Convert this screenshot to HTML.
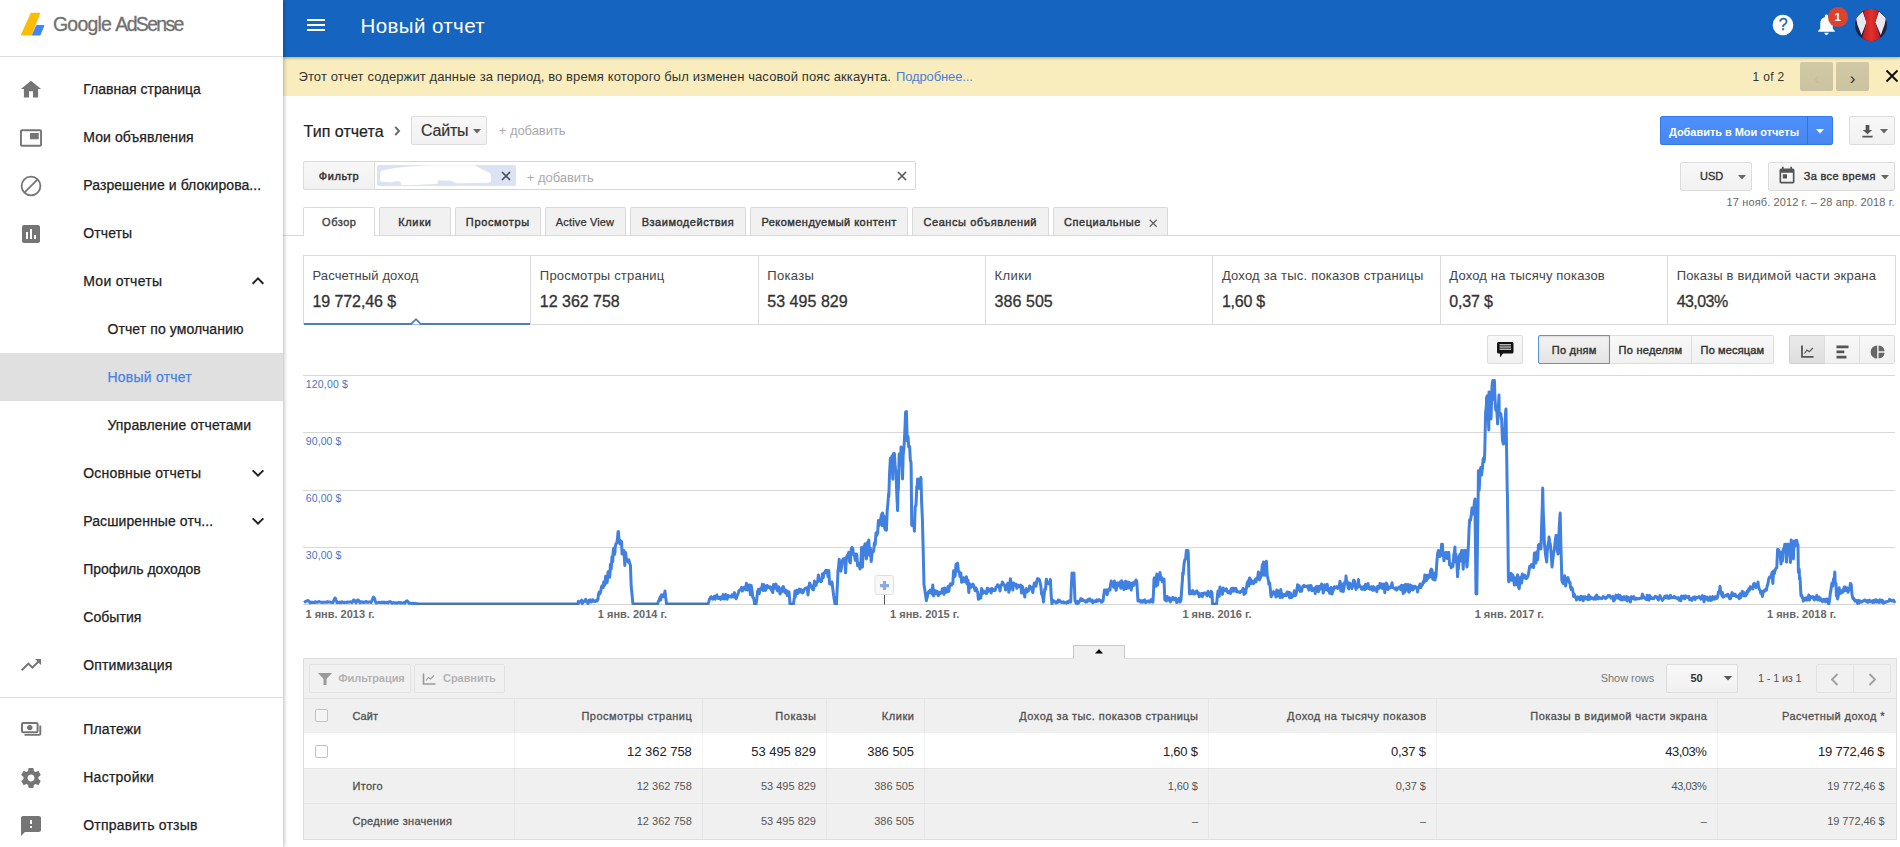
<!DOCTYPE html>
<html lang="ru"><head><meta charset="utf-8"><title>Новый отчет – Google AdSense</title>
<style>
html,body{margin:0;padding:0;}
body{width:1900px;height:847px;overflow:hidden;background:#fff;position:relative;font-family:"Liberation Sans",sans-serif;}
.t{position:absolute;white-space:nowrap;}
.b{position:absolute;box-sizing:border-box;}
svg{position:absolute;overflow:visible;}
</style></head><body>
<div class="b" style="left:0.00px;top:0.00px;width:283.00px;height:847.00px;background:#fff;box-shadow:1px 0 4px rgba(0,0,0,.28);z-index:5;"></div>
<div class="b" style="left:0;top:0;width:283px;height:847px;z-index:6;">
<svg style="left:0;top:0" width="60" height="56" viewBox="0 0 60 56"><path d="M30.9 12.8h8.6c.5 0 .8.4.6.9L31.6 35.4H21.6c-.5 0-.8-.4-.6-.9z" fill="#fbbc05"/><path d="M37.2 24.9h6.4c.6 0 .9.5.7 1l-3.6 8.6c-.2.5-.7.9-1.300.9H31.6l4.400-9.600c.2-.5.7-.9 1.200-.9z" fill="#4285f4"/></svg>
<div class="t" style="left:53.00px;top:14.79px;font-size:19.5px;line-height:19.5px;color:#707070;letter-spacing:-0.813px;-webkit-text-stroke:0.3px;">Google</div>
<div class="t" style="left:115.30px;top:14.79px;font-size:19.5px;line-height:19.5px;color:#707070;letter-spacing:-1.663px;-webkit-text-stroke:0.3px;">AdSense</div>
<div class="b" style="left:0.00px;top:56.00px;width:283.00px;height:1.00px;background:#e0e0e0;"></div>
<svg style="left:19px;top:77px" width="24" height="24" viewBox="0 0 24 24"><path d="M10 20.5v-6.300h4v6.300h5.100V12h3L12 3.800 1.900 12h3v8.500z" fill="#757575"/></svg>
<div class="t" style="left:83.25px;top:82.15px;font-size:14px;line-height:14px;color:#212121;letter-spacing:0.005px;-webkit-text-stroke:0.25px;">Главная страница</div>
<svg style="left:19px;top:126px" width="24" height="24" viewBox="0 0 24 24"><path d="M19.750 7h-8.750v6.250h8.750zM21 3.300H3c-1.100 0-2 .9-2 2v13.400c0 1.100.9 2 2 2h18c1.100 0 2-.9 2-2V5.300c0-1.100-.9-2-2-2zm.1 15.500H2.900V5.200h18.200z" fill="#757575"/></svg>
<div class="t" style="left:83.25px;top:130.15px;font-size:14px;line-height:14px;color:#212121;letter-spacing:0.094px;-webkit-text-stroke:0.25px;">Мои объявления</div>
<svg style="left:18.700px;top:173.700px" width="24" height="24" viewBox="0 0 24 24"><circle cx="12" cy="12" r="9.400" fill="none" stroke="#757575" stroke-width="1.800"/><path d="M18.600 5.400L5.400 18.600" stroke="#757575" stroke-width="1.800"/></svg>
<div class="t" style="left:83.25px;top:178.15px;font-size:14px;line-height:14px;color:#212121;letter-spacing:0.072px;-webkit-text-stroke:0.25px;">Разрешение и блокирова...</div>
<svg style="left:19px;top:221.700px" width="24" height="24" viewBox="0 0 24 24"><path d="M19 3H5c-1.100 0-2 .9-2 2v14c0 1.100.9 2 2 2h14c1.100 0 2-.9 2-2V5c0-1.100-.9-2-2-2zM9 17H7v-7h2zm4 0h-2V7h2zm4 0h-2v-4h2z" fill="#757575"/></svg>
<div class="t" style="left:83.25px;top:226.15px;font-size:14px;line-height:14px;color:#212121;letter-spacing:0.102px;-webkit-text-stroke:0.25px;">Отчеты</div>
<div class="t" style="left:83.25px;top:274.15px;font-size:14px;line-height:14px;color:#212121;letter-spacing:0.271px;-webkit-text-stroke:0.25px;">Мои отчеты</div>
<svg style="left:246px;top:269px" width="24" height="24" viewBox="0 0 24 24"><path d="M6.700 14.700L12 9.400l5.300 5.300" fill="none" stroke="#212121" stroke-width="2"/></svg>
<div class="t" style="left:107.50px;top:322.15px;font-size:14px;line-height:14px;color:#212121;letter-spacing:0.089px;-webkit-text-stroke:0.25px;">Отчет по умолчанию</div>
<div class="b" style="left:0.00px;top:353.00px;width:283.00px;height:48.00px;background:#e0e0e0;"></div>
<div class="t" style="left:107.50px;top:370.15px;font-size:14px;line-height:14px;color:#4a80e0;letter-spacing:0.225px;-webkit-text-stroke:0.25px;">Новый отчет</div>
<div class="t" style="left:107.50px;top:418.15px;font-size:14px;line-height:14px;color:#212121;letter-spacing:0.108px;-webkit-text-stroke:0.25px;">Управление отчетами</div>
<div class="t" style="left:83.25px;top:466.15px;font-size:14px;line-height:14px;color:#212121;letter-spacing:0.181px;-webkit-text-stroke:0.25px;">Основные отчеты</div>
<svg style="left:246px;top:461px" width="24" height="24" viewBox="0 0 24 24"><path d="M6.700 9.400L12 14.700l5.300-5.300" fill="none" stroke="#212121" stroke-width="2"/></svg>
<div class="t" style="left:83.25px;top:514.15px;font-size:14px;line-height:14px;color:#212121;letter-spacing:0.093px;-webkit-text-stroke:0.25px;">Расширенные отч...</div>
<svg style="left:246px;top:509px" width="24" height="24" viewBox="0 0 24 24"><path d="M6.700 9.400L12 14.700l5.300-5.300" fill="none" stroke="#212121" stroke-width="2"/></svg>
<div class="t" style="left:83.25px;top:562.15px;font-size:14px;line-height:14px;color:#212121;letter-spacing:-0.022px;-webkit-text-stroke:0.25px;">Профиль доходов</div>
<div class="t" style="left:83.25px;top:610.15px;font-size:14px;line-height:14px;color:#212121;letter-spacing:0.065px;-webkit-text-stroke:0.25px;">События</div>
<svg style="left:19px;top:653px" width="24" height="24" viewBox="0 0 24 24"><path d="M16 6l2.290 2.290-4.880 4.880-4-4L2 16.590 3.410 18l6-6 4 4 6.300-6.290L22 12V6z" fill="#757575"/></svg>
<div class="t" style="left:83.25px;top:658.15px;font-size:14px;line-height:14px;color:#212121;letter-spacing:0.134px;-webkit-text-stroke:0.25px;">Оптимизация</div>
<div class="b" style="left:0.00px;top:697.00px;width:283.00px;height:1.00px;background:#e0e0e0;"></div>
<svg style="left:19px;top:717px" width="24" height="24" viewBox="0 0 24 24"><rect x="3" y="5.900" width="15.600" height="9.400" rx="1.200" fill="none" stroke="#757575" stroke-width="2"/><circle cx="10.800" cy="10.600" r="2.700" fill="#757575"/><path d="M21.300 8.500v8.200c0 .7-.5 1.200-1.200 1.200H5.500" fill="none" stroke="#757575" stroke-width="1.900"/></svg>
<div class="t" style="left:83.25px;top:722.15px;font-size:14px;line-height:14px;color:#212121;letter-spacing:0.175px;-webkit-text-stroke:0.25px;">Платежи</div>
<svg style="left:19px;top:766px" width="24" height="24" viewBox="0 0 24 24"><path d="M19.430 12.980c.04-.32.070-.64.070-.98s-.030-.66-.07-.98l2.110-1.650c.19-.15.240-.42.120-.64l-2-3.460c-.12-.22-.39-.3-.61-.22l-2.490 1c-.52-.4-1.080-.73-1.690-.98l-.38-2.650C14.460 2.180 14.250 2 14 2h-4c-.25 0-.46.180-.49.420l-.38 2.650c-.61.250-1.170.59-1.690.98l-2.490-1c-.23-.09-.49 0-.61.220l-2 3.460c-.13.220-.07.490.12.640l2.110 1.650c-.04.320-.07.650-.07.980s.03.660.07.980l-2.110 1.650c-.19.150-.24.420-.12.640l2 3.460c.12.220.39.300.61.220l2.490-1c.52.400 1.080.73 1.690.98l.38 2.650c.03.240.24.420.49.420h4c.25 0 .46-.18.490-.42l.38-2.650c.61-.25 1.170-.59 1.690-.98l2.490 1c.23.090.49 0 .61-.22l2-3.460c.12-.22.070-.49-.12-.64l-2.110-1.650zM12 15.500c-1.930 0-3.500-1.570-3.500-3.500s1.570-3.500 3.500-3.500 3.500 1.570 3.500 3.500-1.570 3.500-3.500 3.500z" fill="#757575"/></svg>
<div class="t" style="left:83.25px;top:770.15px;font-size:14px;line-height:14px;color:#212121;letter-spacing:0.251px;-webkit-text-stroke:0.25px;">Настройки</div>
<svg style="left:19px;top:814px" width="24" height="24" viewBox="0 0 24 24"><path d="M20 2H4c-1.100 0-1.990.9-1.990 2L2 22l4-4h14c1.100 0 2-.9 2-2V4c0-1.100-.9-2-2-2zm-7 12h-2v-2h2v2zm0-4h-2V6h2v4z" fill="#757575"/></svg>
<div class="t" style="left:83.25px;top:818.15px;font-size:14px;line-height:14px;color:#212121;letter-spacing:0.219px;-webkit-text-stroke:0.25px;">Отправить отзыв</div>
</div>
<div class="b" style="left:283.00px;top:0.00px;width:1617.00px;height:57.00px;background:#1565c0;box-shadow:0 1px 3px rgba(0,0,0,.32);z-index:4;"></div>
<div class="b" style="left:0;top:0;width:1900px;height:56px;z-index:7;">
<svg style="left:304px;top:13px" width="24" height="24" viewBox="0 0 24 24"><path d="M3 18h18v-2H3zm0-5h18v-2H3zm0-7v2h18V6z" fill="#fff"/></svg>
<div class="t" style="left:360.50px;top:15.65px;font-size:20.5px;line-height:20.5px;color:#fff;letter-spacing:0.409px;">Новый отчет</div>
<svg style="left:1771.200px;top:13px" width="24" height="24" viewBox="0 0 24 24"><circle cx="12" cy="12" r="10.300" fill="#fff"/></svg>
<div class="t" style="left:1783.20px;transform:translateX(-50%);top:17.26px;font-size:16px;line-height:16px;color:#1d5fae;-webkit-text-stroke:0.3px;">?</div>
<svg style="left:1814px;top:12.100px" width="25" height="25" viewBox="0 0 24 24"><path d="M12 22c1.100 0 2-.9 2-2h-4c0 1.100.89 2 2 2zm6-6v-5c0-3.070-1.640-5.640-4.500-6.320V4c0-.83-.67-1.500-1.500-1.500s-1.500.67-1.500 1.500v.68C7.630 5.360 6 7.920 6 11v5l-2 2v1h16v-1l-2-2z" fill="#fff"/></svg>
<div class="b" style="left:1828.20px;top:7.10px;width:19.60px;height:19.60px;background:#d9432f;border-radius:50%;"></div>
<div class="t" style="left:1837.60px;transform:translateX(-50%);top:11.97px;font-size:11.5px;line-height:11.5px;color:#fff;font-weight:bold;">1</div>
<svg style="left:1855px;top:8.900px" width="32" height="32" viewBox="0 0 32 32"><defs><clipPath id="av"><circle cx="16" cy="16" r="16"/></clipPath><linearGradient id="tie" x1="0" x2="1"><stop offset="0" stop-color="#c4161c"/><stop offset=".5" stop-color="#e0322d"/><stop offset="1" stop-color="#b81419"/></linearGradient></defs><g clip-path="url(#av)"><rect width="32" height="32" fill="#1d2444"/><path d="M1 9L7.700 2.500 11.400 13.300 6.500 26 2.500 16z" fill="#ebe6ee"/><path d="M31 9L23.900 2.500 20.300 13.300 25.800 26 29.500 16z" fill="#ebe6ee"/><path d="M7.700 0H23.900L20.300 13.300 26.500 32H6.500L11.400 13.300z" fill="url(#tie)"/></g></svg>
</div>
<div class="b" style="left:283.00px;top:56.00px;width:1617.00px;height:40.00px;background:#f9edbe;"></div>
<div class="t" style="left:298.50px;top:70.00px;font-size:13px;line-height:13px;color:#333;letter-spacing:0.109px;">Этот отчет содержит данные за период, во время которого был изменен часовой пояс аккаунта.</div>
<div class="t" style="left:896.00px;top:70.00px;font-size:13px;line-height:13px;color:#4b7fd6;letter-spacing:-0.129px;">Подробнее...</div>
<div class="t" style="left:1752.50px;top:71.34px;font-size:12px;line-height:12px;color:#333;letter-spacing:0.330px;">1 of 2</div>
<div class="b" style="left:1800.00px;top:62.00px;width:33.00px;height:29.00px;background:linear-gradient(#d1c8a5,#cbc29f);border-radius:2px;"></div>
<div class="b" style="left:1836.00px;top:62.00px;width:33.00px;height:29.00px;background:linear-gradient(#d1c8a5,#cbc29f);border-radius:2px;"></div>
<div class="t" style="left:1816.50px;transform:translateX(-50%);top:69.61px;font-size:17px;line-height:17px;color:#c5bc9c;">‹</div>
<div class="t" style="left:1852.50px;transform:translateX(-50%);top:69.61px;font-size:17px;line-height:17px;color:#333;">›</div>
<svg style="left:1885.200px;top:69px" width="14" height="14" viewBox="0 0 14 14"><path d="M1.500 1.500l11 11M12.500 1.500l-11 11" stroke="#111" stroke-width="2" fill="none"/></svg>
<div class="t" style="left:303.60px;top:123.86px;font-size:16px;line-height:16px;color:#222;letter-spacing:0.026px;-webkit-text-stroke:0.2px;">Тип отчета</div>
<svg style="left:393.500px;top:126px" width="7" height="10" viewBox="0 0 7 10"><path d="M1.200 .800L5 5 1.200 9.200" stroke="#6a6a6a" stroke-width="2" fill="none"/></svg>
<div class="b" style="left:411.00px;top:116.00px;width:76.00px;height:29.00px;background:linear-gradient(#f8f8f8,#f1f1f1);border:1px solid #dcdcdc;border-radius:2px;"></div>
<div class="t" style="left:421.00px;top:123.06px;font-size:16px;line-height:16px;color:#333;letter-spacing:-0.200px;-webkit-text-stroke:0.2px;">Сайты</div>
<svg style="left:473px;top:129px" width="8" height="5" viewBox="0 0 8 5"><path d="M0 0h8L4 4.500z" fill="#666"/></svg>
<div class="t" style="left:498.80px;top:123.70px;font-size:13px;line-height:13px;color:#aaa;letter-spacing:-0.059px;">+ добавить</div>
<div class="b" style="left:1660.00px;top:116.00px;width:173.00px;height:29.00px;background:linear-gradient(#4d90fe,#4787ed);border:1px solid #3079ed;border-radius:2px;"></div>
<div class="b" style="left:1806.50px;top:117.00px;width:1.00px;height:26.50px;background:#3571d6;"></div>
<div class="t" style="left:1669.00px;top:126.69px;font-size:11px;line-height:11px;color:#fff;font-weight:bold;letter-spacing:-0.039px;">Добавить в Мои отчеты</div>
<svg style="left:1816px;top:128.500px" width="8" height="5" viewBox="0 0 8 5"><path d="M0 0h8L4 4.500z" fill="#fff"/></svg>
<div class="b" style="left:1849.00px;top:116.00px;width:46.00px;height:29.00px;background:linear-gradient(#f8f8f8,#f1f1f1);border:1px solid #dcdcdc;border-radius:2px;"></div>
<svg style="left:1860.500px;top:123.500px" width="13" height="14" viewBox="0 0 14 15"><path d="M5 1h4v5.500h3L7 11 2 6.500h3zM1.500 12.500h11v2h-11z" fill="#555"/></svg>
<svg style="left:1880px;top:129px" width="8" height="5" viewBox="0 0 8 5"><path d="M0 0h8L4 4.500z" fill="#666"/></svg>
<div class="b" style="left:303.00px;top:161.00px;width:613.00px;height:29.00px;background:#fff;border:1px solid #d6d6d6;border-radius:2px;"></div>
<div class="b" style="left:303.00px;top:161.00px;width:72.00px;height:29.00px;background:linear-gradient(#f8f8f8,#f1f1f1);border:1px solid #dcdcdc;border-radius:2px;border-radius:2px 0 0 2px;"></div>
<div class="t" style="left:318.80px;top:170.69px;font-size:11px;line-height:11px;color:#333;letter-spacing:0.575px;-webkit-text-stroke:0.45px;">Фильтр</div>
<div class="b" style="left:377.00px;top:165.00px;width:139.00px;height:21.00px;background:#dbe2f3;border-radius:2px;"></div>
<svg style="left:377px;top:165px" width="139" height="21" viewBox="0 0 139 21"><path d="M3.1 8.2 L4.8 5.6 L17.4 3.1 L32.6 1.4 L55.3 0.2 L97.4 0.2 L102.5 3.1 L113.4 8.2 L114.3 16.6 L110.9 17.8 L79.7 18.3 L73.8 15.7 L61.2 15.3 L60.4 19.1 L34.3 19.9 L24.2 19.9 L23.3 16.2 L18.3 16.2 L14.1 17.4 L3.1 16.6z" fill="#fff"/></svg>
<svg style="left:500.700px;top:170.700px" width="10" height="10" viewBox="0 0 10 10"><path d="M1 1l8 8M9 1l-8 8" stroke="#474d5c" stroke-width="1.700" fill="none"/></svg>
<div class="t" style="left:526.80px;top:170.70px;font-size:13px;line-height:13px;color:#aaa;letter-spacing:-0.039px;">+ добавить</div>
<svg style="left:896.500px;top:171px" width="10" height="10" viewBox="0 0 10 10"><path d="M1 1l8 8M9 1l-8 8" stroke="#555" stroke-width="1.600" fill="none"/></svg>
<div class="b" style="left:1680.00px;top:162.00px;width:72.00px;height:29.00px;background:linear-gradient(#f8f8f8,#f1f1f1);border:1px solid #dcdcdc;border-radius:2px;"></div>
<div class="t" style="left:1700.00px;top:170.99px;font-size:11px;line-height:11px;color:#333;letter-spacing:0.025px;-webkit-text-stroke:0.35px;">USD</div>
<svg style="left:1738px;top:174.500px" width="8" height="5" viewBox="0 0 8 5"><path d="M0 0h8L4 4.500z" fill="#666"/></svg>
<div class="b" style="left:1768.00px;top:162.00px;width:127.00px;height:29.00px;background:linear-gradient(#f8f8f8,#f1f1f1);border:1px solid #dcdcdc;border-radius:2px;"></div>
<svg style="left:1777px;top:166px" width="20" height="20" viewBox="0 0 24 24"><path d="M19 3h-1V1h-2v2H8V1H6v2H5c-1.110 0-1.990.9-1.990 2L3 19c0 1.100.89 2 2 2h14c1.100 0 2-.9 2-2V5c0-1.100-.9-2-2-2zm0 16H5V8h14v11zM7 10h5v5H7z" fill="#555"/></svg>
<div class="t" style="left:1803.70px;top:170.99px;font-size:11px;line-height:11px;color:#333;letter-spacing:0.349px;-webkit-text-stroke:0.35px;">За все время</div>
<svg style="left:1881px;top:174.500px" width="8" height="5" viewBox="0 0 8 5"><path d="M0 0h8L4 4.500z" fill="#666"/></svg>
<div class="t" style="right:5.39px;top:197.49px;font-size:11px;line-height:11px;color:#666;letter-spacing:0.113px;">17 нояб. 2012 г. – 28 апр. 2018 г.</div>
<div class="b" style="left:283.00px;top:235.00px;width:1617.00px;height:1.00px;background:#d9d9d9;"></div>
<div class="b" style="left:303.00px;top:207.00px;width:72.00px;height:29.00px;background:#fff;border:1px solid #d9d9d9;border-bottom:none;border-radius:2px 2px 0 0;"></div>
<div class="t" style="left:339.30px;transform:translateX(-50%);top:216.59px;font-size:11px;line-height:11px;color:#444;letter-spacing:0.534px;-webkit-text-stroke:0.4px;">Обзор</div>
<div class="b" style="left:379.00px;top:207.00px;width:72.00px;height:28.00px;background:#f1f1f1;border:1px solid #d9d9d9;border-bottom:none;border-radius:2px 2px 0 0;"></div>
<div class="t" style="left:414.80px;transform:translateX(-50%);top:216.59px;font-size:11px;line-height:11px;color:#333;letter-spacing:0.681px;-webkit-text-stroke:0.4px;">Клики</div>
<div class="b" style="left:455.00px;top:207.00px;width:86.00px;height:28.00px;background:#f1f1f1;border:1px solid #d9d9d9;border-bottom:none;border-radius:2px 2px 0 0;"></div>
<div class="t" style="left:497.80px;transform:translateX(-50%);top:216.59px;font-size:11px;line-height:11px;color:#333;letter-spacing:0.635px;-webkit-text-stroke:0.4px;">Просмотры</div>
<div class="b" style="left:545.00px;top:207.00px;width:81.00px;height:28.00px;background:#f1f1f1;border:1px solid #d9d9d9;border-bottom:none;border-radius:2px 2px 0 0;"></div>
<div class="t" style="left:585.00px;transform:translateX(-50%);top:216.59px;font-size:11px;line-height:11px;color:#333;letter-spacing:0.150px;-webkit-text-stroke:0.25px;">Active View</div>
<div class="b" style="left:630.00px;top:207.00px;width:116.00px;height:28.00px;background:#f1f1f1;border:1px solid #d9d9d9;border-bottom:none;border-radius:2px 2px 0 0;"></div>
<div class="t" style="left:687.95px;transform:translateX(-50%);top:216.59px;font-size:11px;line-height:11px;color:#333;letter-spacing:0.527px;-webkit-text-stroke:0.4px;">Взаимодействия</div>
<div class="b" style="left:750.00px;top:207.00px;width:158.00px;height:28.00px;background:#f1f1f1;border:1px solid #d9d9d9;border-bottom:none;border-radius:2px 2px 0 0;"></div>
<div class="t" style="left:829.05px;transform:translateX(-50%);top:216.59px;font-size:11px;line-height:11px;color:#333;letter-spacing:0.460px;-webkit-text-stroke:0.4px;">Рекомендуемый контент</div>
<div class="b" style="left:912.00px;top:207.00px;width:137.00px;height:28.00px;background:#f1f1f1;border:1px solid #d9d9d9;border-bottom:none;border-radius:2px 2px 0 0;"></div>
<div class="t" style="left:980.30px;transform:translateX(-50%);top:216.59px;font-size:11px;line-height:11px;color:#333;letter-spacing:0.556px;-webkit-text-stroke:0.4px;">Сеансы объявлений</div>
<div class="b" style="left:1053.00px;top:207.00px;width:115.00px;height:28.00px;background:#f1f1f1;border:1px solid #d9d9d9;border-bottom:none;border-radius:2px 2px 0 0;"></div>
<div class="t" style="left:1064.00px;top:216.59px;font-size:11px;line-height:11px;color:#333;letter-spacing:0.552px;-webkit-text-stroke:0.4px;">Специальные</div>
<svg style="left:1149.300px;top:218.500px" width="8.400" height="8.400" viewBox="0 0 8.400 8.400"><path d="M.7.700l7 7M7.700.700l-7 7" stroke="#666" stroke-width="1.300" fill="none"/></svg>
<div class="b" style="left:303.00px;top:255.00px;width:1593.00px;height:70.00px;background:#fff;border:1px solid #dadada;"></div>
<div class="t" style="left:312.50px;top:269.00px;font-size:13px;line-height:13px;color:#444;letter-spacing:0.114px;">Расчетный доход</div>
<div class="t" style="left:312.50px;top:294.06px;font-size:16px;line-height:16px;color:#333;letter-spacing:-0.083px;-webkit-text-stroke:0.3px;">19 772,46 $</div>
<div class="b" style="left:530.36px;top:255.30px;width:1.00px;height:69.00px;background:#dadada;"></div>
<div class="t" style="left:539.86px;top:269.00px;font-size:13px;line-height:13px;color:#444;letter-spacing:0.199px;">Просмотры страниц</div>
<div class="t" style="left:539.86px;top:294.06px;font-size:16px;line-height:16px;color:#333;letter-spacing:-0.027px;-webkit-text-stroke:0.3px;">12 362 758</div>
<div class="b" style="left:757.71px;top:255.30px;width:1.00px;height:69.00px;background:#dadada;"></div>
<div class="t" style="left:767.21px;top:269.00px;font-size:13px;line-height:13px;color:#444;letter-spacing:0.344px;">Показы</div>
<div class="t" style="left:767.21px;top:294.06px;font-size:16px;line-height:16px;color:#333;letter-spacing:0.043px;-webkit-text-stroke:0.3px;">53 495 829</div>
<div class="b" style="left:985.07px;top:255.30px;width:1.00px;height:69.00px;background:#dadada;"></div>
<div class="t" style="left:994.57px;top:269.00px;font-size:13px;line-height:13px;color:#444;letter-spacing:0.426px;">Клики</div>
<div class="t" style="left:994.57px;top:294.06px;font-size:16px;line-height:16px;color:#333;letter-spacing:0.060px;-webkit-text-stroke:0.3px;">386 505</div>
<div class="b" style="left:1212.43px;top:255.30px;width:1.00px;height:69.00px;background:#dadada;"></div>
<div class="t" style="left:1221.93px;top:269.00px;font-size:13px;line-height:13px;color:#444;letter-spacing:0.207px;">Доход за тыс. показов страницы</div>
<div class="t" style="left:1221.93px;top:294.06px;font-size:16px;line-height:16px;color:#333;letter-spacing:-0.247px;-webkit-text-stroke:0.3px;">1,60 $</div>
<div class="b" style="left:1439.79px;top:255.30px;width:1.00px;height:69.00px;background:#dadada;"></div>
<div class="t" style="left:1449.29px;top:269.00px;font-size:13px;line-height:13px;color:#444;letter-spacing:0.176px;">Доход на тысячу показов</div>
<div class="t" style="left:1449.29px;top:294.06px;font-size:16px;line-height:16px;color:#333;letter-spacing:-0.163px;-webkit-text-stroke:0.3px;">0,37 $</div>
<div class="b" style="left:1667.14px;top:255.30px;width:1.00px;height:69.00px;background:#dadada;"></div>
<div class="t" style="left:1676.64px;top:269.00px;font-size:13px;line-height:13px;color:#444;letter-spacing:0.202px;">Показы в видимой части экрана</div>
<div class="t" style="left:1676.64px;top:294.06px;font-size:16px;line-height:16px;color:#333;letter-spacing:-0.544px;-webkit-text-stroke:0.3px;">43,03%</div>
<div class="b" style="left:304.00px;top:323.00px;width:226.00px;height:2.00px;background:#4b7db6;"></div>
<svg style="left:409.700px;top:318px" width="12" height="7" viewBox="0 0 12 7"><path d="M.6 6.600L6 1.200l5.400 5.400" fill="#fff" stroke="#4b7db6" stroke-width="1.700"/></svg>
<div class="b" style="left:1487.00px;top:335.00px;width:36.00px;height:29.00px;background:linear-gradient(#f8f8f8,#f1f1f1);border:1px solid #dcdcdc;border-radius:2px;"></div>
<svg style="left:1497px;top:342px" width="16.500" height="16" viewBox="0 0 16.500 16"><path d="M1.500 0h13.500c.8 0 1.500.7 1.500 1.500v8.500c0 .8-.7 1.500-1.500 1.500H6l-3 4v-4H1.500C.7 11.500 0 10.800 0 10V1.500C0 .7.7 0 1.500 0z" fill="#111"/><path d="M2.500 2.800h11.500M2.500 5h11.500M2.500 7.200h11.500" stroke="#fff" stroke-width="1"/></svg>
<div class="b" style="left:1538.00px;top:335.00px;width:236.00px;height:29.00px;background:linear-gradient(#f8f8f8,#f1f1f1);border:1px solid #dcdcdc;border-radius:2px;"></div>
<div class="b" style="left:1538.00px;top:335.00px;width:72.00px;height:29.00px;background:linear-gradient(#f3f3f3,#e4e4e4);border:1px solid #5b93d6;border-radius:2px 0 0 2px;box-shadow:inset 0 1px 2px rgba(0,0,0,.1);"></div>
<div class="b" style="left:1691.00px;top:336.00px;width:1.00px;height:27.00px;background:#dcdcdc;"></div>
<div class="t" style="left:1551.80px;top:344.99px;font-size:11px;line-height:11px;color:#333;letter-spacing:0.230px;-webkit-text-stroke:0.4px;">По дням</div>
<div class="t" style="left:1618.60px;top:344.99px;font-size:11px;line-height:11px;color:#333;letter-spacing:0.256px;-webkit-text-stroke:0.4px;">По неделям</div>
<div class="t" style="left:1700.60px;top:344.99px;font-size:11px;line-height:11px;color:#333;letter-spacing:0.150px;-webkit-text-stroke:0.4px;">По месяцам</div>
<div class="b" style="left:1789.00px;top:335.00px;width:106.00px;height:29.00px;background:linear-gradient(#f8f8f8,#f1f1f1);border:1px solid #dcdcdc;border-radius:2px;"></div>
<div class="b" style="left:1789.00px;top:335.00px;width:36.00px;height:29.00px;background:linear-gradient(#eaeaea,#dedede);border:1px solid #d0d0d0;border-radius:2px 0 0 2px;"></div>
<div class="b" style="left:1824.30px;top:336.00px;width:1.00px;height:27.00px;background:#dcdcdc;"></div>
<div class="b" style="left:1858.80px;top:336.00px;width:1.00px;height:27.00px;background:#dcdcdc;"></div>
<svg style="left:1800px;top:344px" width="15" height="15" viewBox="0 0 15 15"><path d="M2 1.500v11.300h11.500" stroke="#555" stroke-width="1.800" fill="none"/><path d="M4.500 9.500l2.500-3.500 2.300 1.800 3.500-3.800" stroke="#555" stroke-width="1.200" fill="none"/></svg>
<svg style="left:1835.500px;top:344.500px" width="14" height="14" viewBox="0 0 14 14"><path d="M.5.500h12v2.700H.5zM.5 5.600h7.800v2.700H.5zM.5 10.700h10v2.700H.5z" fill="#555"/></svg>
<svg style="left:1870.500px;top:344.500px" width="14" height="14" viewBox="0 0 14 14"><path d="M6.200.4v13.200A6.600 6.600 0 0 1 6.200.4zM7.600.4A6.600 6.600 0 0 1 13.600 6.300H7.600zM7.600 7.700h6A6.600 6.600 0 0 1 7.600 13.600z" fill="#666"/></svg>
<svg style="left:303px;top:370px" width="1597" height="260" viewBox="0 0 1597 260"><defs><clipPath id="cc"><rect x="0" y="0" width="1597" height="235"/></clipPath></defs>
<path d="M0 5.5H1592" stroke="#d9d9d9" stroke-width="1"/>
<path d="M0 62.5H1592" stroke="#d9d9d9" stroke-width="1"/>
<path d="M0 120.5H1592" stroke="#d9d9d9" stroke-width="1"/>
<path d="M0 177.5H1592" stroke="#d9d9d9" stroke-width="1"/>
<path d="M0 234.500H1592" stroke="#d4d4d4" stroke-width="1"/>
<text x="2.800" y="17.8" font-size="10.500" letter-spacing="0.179" fill="#4a74c4" font-family="Liberation Sans, sans-serif">120,00 $</text>
<text x="2.800" y="74.5" font-size="10.500" letter-spacing="0.096" fill="#4a74c4" font-family="Liberation Sans, sans-serif">90,00 $</text>
<text x="2.800" y="131.7" font-size="10.500" letter-spacing="0.096" fill="#4a74c4" font-family="Liberation Sans, sans-serif">60,00 $</text>
<text x="2.800" y="189.2" font-size="10.500" letter-spacing="0.096" fill="#4a74c4" font-family="Liberation Sans, sans-serif">30,00 $</text>
<text x="2.5" y="247.600" font-size="11" font-weight="bold" fill="#686868" font-family="Liberation Sans, sans-serif">1 янв. 2013 г.</text>
<text x="294.8" y="247.600" font-size="11" font-weight="bold" fill="#686868" font-family="Liberation Sans, sans-serif">1 янв. 2014 г.</text>
<text x="587.1" y="247.600" font-size="11" font-weight="bold" fill="#686868" font-family="Liberation Sans, sans-serif">1 янв. 2015 г.</text>
<text x="879.4" y="247.600" font-size="11" font-weight="bold" fill="#686868" font-family="Liberation Sans, sans-serif">1 янв. 2016 г.</text>
<text x="1171.7" y="247.600" font-size="11" font-weight="bold" fill="#686868" font-family="Liberation Sans, sans-serif">1 янв. 2017 г.</text>
<text x="1464.0" y="247.600" font-size="11" font-weight="bold" fill="#686868" font-family="Liberation Sans, sans-serif">1 янв. 2018 г.</text>
<path d="M581.500 224.500V234.500" stroke="#555" stroke-width="1"/><rect x="572" y="205.500" width="18.500" height="19" rx="2" fill="#f8f8f8" stroke="#e0e0e0"/><path d="M577 215.600h9M581.500 211.100v9" stroke="#8dabd9" stroke-width="3.200"/>
<polyline fill="none" stroke="#4080e0" stroke-width="3" clip-path="url(#cc)" stroke-linejoin="round" points="1.0,232.5 1.8,232.0 2.6,231.4 3.4,231.2 4.2,230.7 5.0,230.5 5.8,231.0 6.6,232.2 7.0,232.8 7.4,232.2 8.2,232.5 9.0,232.2 9.8,232.5 10.6,232.4 11.4,232.4 12.0,232.5 12.2,231.7 13.0,232.1 13.8,232.2 14.6,232.3 15.4,231.7 16.2,231.6 17.0,232.1 17.8,232.3 18.6,232.3 19.4,232.5 20.2,232.2 21.0,232.2 21.8,232.3 22.6,232.3 23.4,232.2 24.2,231.6 25.0,232.2 25.8,231.9 26.6,232.2 27.4,232.1 28.2,232.3 29.0,232.4 29.8,232.2 30.0,232.5 30.6,231.0 31.4,229.1 32.0,228.0 32.2,228.0 33.0,230.1 33.8,231.7 34.0,232.8 34.6,232.4 35.4,232.6 36.2,232.5 37.0,232.0 37.8,232.7 38.6,232.1 39.4,231.7 40.2,232.5 41.0,232.6 41.8,232.2 42.6,232.4 43.4,232.6 44.2,231.9 45.0,232.2 45.8,232.2 46.6,232.1 47.4,231.8 48.2,232.3 49.0,232.5 49.8,231.4 50.6,229.9 51.0,230.0 51.4,230.3 52.2,231.4 53.0,232.8 53.8,231.5 54.6,229.9 55.0,230.0 55.4,230.1 56.2,231.4 57.0,232.8 57.8,232.1 58.6,231.7 59.4,232.0 60.2,232.6 61.0,232.0 61.8,232.4 62.6,231.7 63.4,231.4 64.2,232.4 65.0,232.2 65.8,232.0 66.6,232.0 67.4,232.0 68.0,232.5 68.2,232.0 69.0,230.3 69.8,228.5 70.6,227.0 71.4,228.2 72.2,230.7 73.0,233.0 73.8,232.7 74.6,232.7 75.4,232.2 76.2,232.4 77.0,232.5 77.8,232.7 78.6,232.0 79.4,232.7 80.2,232.6 81.0,232.1 81.8,232.9 82.6,232.5 83.4,232.3 84.2,232.2 85.0,233.0 85.8,232.1 86.6,231.7 87.0,231.5 87.4,231.7 88.2,232.2 89.0,233.2 89.8,233.1 90.6,232.6 91.4,232.9 92.2,233.0 93.0,232.7 93.8,233.2 94.6,232.8 95.4,232.7 96.2,232.5 97.0,233.0 97.8,232.5 98.6,233.1 99.4,233.1 100.2,233.1 101.0,232.5 101.8,232.7 102.0,233.2 102.6,231.9 103.4,231.0 104.0,231.0 104.2,230.8 105.0,231.9 105.8,232.6 106.0,233.4 106.6,233.0 107.4,233.3 108.2,233.4 109.0,233.4 109.8,233.2 110.6,233.5 111.4,233.4 112.0,233.6 112.2,233.4 113.0,233.8 113.8,233.6 114.0,234.0 114.6,234.0 115.4,234.0 116.2,234.0 117.0,234.0 117.8,234.0 118.6,234.0 119.4,234.0 120.2,234.0 121.0,234.0 121.8,234.0 122.6,234.0 123.4,234.0 124.2,234.0 125.0,234.0 125.8,234.0 126.6,234.0 127.4,234.0 128.2,234.0 129.0,234.0 129.8,234.0 130.6,234.0 131.4,234.0 132.2,234.0 133.0,234.0 133.8,234.0 134.6,234.0 135.4,234.0 136.2,234.0 137.0,234.0 137.8,234.0 138.6,234.0 139.4,234.0 140.2,234.0 141.0,234.0 141.8,234.0 142.6,234.0 143.4,234.0 144.2,234.0 145.0,234.0 145.8,234.0 146.6,234.0 147.4,234.0 148.2,234.0 149.0,234.0 149.8,234.0 150.6,234.0 151.4,234.0 152.2,234.0 153.0,234.0 153.8,234.0 154.6,234.0 155.4,234.0 156.2,234.0 157.0,234.0 157.8,234.0 158.6,234.0 159.4,234.0 160.2,234.0 161.0,234.0 161.8,234.0 162.6,234.0 163.4,234.0 164.2,234.0 165.0,234.0 165.8,234.0 166.6,234.0 167.4,234.0 168.2,234.0 169.0,234.0 169.8,234.0 170.6,234.0 171.4,234.0 172.2,234.0 173.0,234.0 173.8,234.0 174.6,234.0 175.4,234.0 176.2,234.0 177.0,234.0 177.8,234.0 178.6,234.0 179.4,234.0 180.2,234.0 181.0,234.0 181.8,234.0 182.6,234.0 183.4,234.0 184.2,234.0 185.0,234.0 185.8,234.0 186.6,234.0 187.4,234.0 188.2,234.0 189.0,234.0 189.8,234.0 190.6,234.0 191.4,234.0 192.2,234.0 193.0,234.0 193.8,234.0 194.6,234.0 195.4,234.0 196.2,234.0 197.0,234.0 197.8,234.0 198.6,234.0 199.4,234.0 200.2,234.0 201.0,234.0 201.8,234.0 202.6,234.0 203.4,234.0 204.2,234.0 205.0,234.0 205.8,234.0 206.6,234.0 207.4,234.0 208.2,234.0 209.0,234.0 209.8,234.0 210.6,234.0 211.4,234.0 212.2,234.0 213.0,234.0 213.8,234.0 214.6,234.0 215.4,234.0 216.2,234.0 217.0,234.0 217.8,234.0 218.6,234.0 219.4,234.0 220.2,234.0 221.0,234.0 221.8,234.0 222.6,234.0 223.4,234.0 224.2,234.0 225.0,234.0 225.8,234.0 226.6,234.0 227.4,234.0 228.2,234.0 229.0,234.0 229.8,234.0 230.6,234.0 231.4,234.0 232.2,234.0 233.0,234.0 233.8,234.0 234.6,234.0 235.4,234.0 236.2,234.0 237.0,234.0 237.8,234.0 238.6,234.0 239.4,234.0 240.2,234.0 241.0,234.0 241.8,234.0 242.6,234.0 243.4,234.0 244.2,234.0 245.0,234.0 245.8,234.0 246.6,234.0 247.4,234.0 248.2,234.0 249.0,234.0 249.8,234.0 250.6,234.0 251.4,234.0 252.2,234.0 253.0,234.0 253.8,234.0 254.6,234.0 255.4,234.0 256.2,234.0 257.0,234.0 257.8,234.0 258.6,234.0 259.4,234.0 260.2,234.0 261.0,234.0 261.8,234.0 262.6,234.0 263.4,234.0 264.2,234.0 265.0,234.0 265.8,234.0 266.6,234.0 267.4,234.0 268.2,234.0 269.0,234.0 269.8,234.0 270.6,234.0 271.4,234.0 272.2,234.0 273.0,234.0 273.8,234.0 274.6,234.0 275.0,234.0 275.4,231.3 276.0,232.0 276.2,232.3 277.0,232.0 277.8,231.8 278.6,230.0 279.4,233.6 280.2,231.2 281.0,231.8 281.8,231.0 282.6,229.4 283.4,231.7 284.2,231.5 285.0,233.7 285.8,230.4 286.6,231.6 287.0,231.0 287.4,229.8 288.2,231.9 289.0,231.5 289.8,229.7 290.6,231.2 291.4,231.0 292.2,231.5 293.0,230.6 293.8,230.2 294.0,231.0 294.6,229.8 295.0,229.0 295.4,224.9 296.2,222.0 297.0,223.6 297.8,221.1 298.6,216.4 299.4,215.5 300.2,217.6 300.7,212.0 301.0,215.9 301.8,214.9 302.6,206.3 303.4,213.0 304.0,209.0 304.2,212.3 305.0,201.8 305.8,201.5 306.6,207.2 307.0,204.0 307.4,194.5 308.2,199.1 309.0,186.7 309.8,191.8 310.0,184.0 310.6,178.4 311.4,184.7 312.0,182.0 312.2,176.8 313.0,173.7 313.8,173.0 314.6,168.0 315.0,162.0 315.4,161.5 316.2,172.0 317.0,174.0 317.8,170.9 318.6,171.7 319.0,184.0 319.4,180.5 320.2,180.5 321.0,180.6 321.8,195.5 322.0,186.0 322.6,182.6 323.4,189.1 324.2,191.1 325.0,192.0 325.8,189.7 326.6,192.9 327.0,194.0 327.4,195.1 328.2,216.7 329.0,224.0 329.8,233.2 330.0,234.0 330.6,234.0 331.4,234.0 332.2,234.0 333.0,234.0 333.8,234.0 334.6,234.0 335.4,234.0 336.2,234.0 337.0,234.0 337.8,234.0 338.6,234.0 339.4,234.0 340.2,234.0 341.0,234.0 341.8,234.0 342.6,234.0 343.4,234.0 344.2,234.0 345.0,234.0 345.8,234.0 346.6,234.0 347.4,234.0 348.2,234.0 349.0,234.0 349.8,234.0 350.6,234.0 351.4,234.0 352.2,234.0 353.0,234.0 353.8,234.0 354.6,234.0 355.4,231.4 356.2,229.8 357.0,227.4 357.8,230.0 358.0,226.0 358.6,224.8 359.4,226.3 360.2,226.6 361.0,224.1 361.8,222.7 362.0,221.0 362.6,226.7 363.4,232.7 363.5,234.0 364.2,234.0 365.0,234.0 365.8,234.0 366.6,234.0 367.4,234.0 368.2,234.0 369.0,234.0 369.8,234.0 370.6,234.0 371.4,234.0 372.2,234.0 373.0,234.0 373.8,234.0 374.6,234.0 375.4,234.0 376.2,234.0 377.0,234.0 377.8,234.0 378.6,234.0 379.4,234.0 380.2,234.0 381.0,234.0 381.8,234.0 382.6,234.0 383.4,234.0 384.2,234.0 385.0,234.0 385.8,234.0 386.6,234.0 387.4,234.0 388.2,234.0 389.0,234.0 389.8,234.0 390.6,234.0 391.4,234.0 392.2,234.0 393.0,234.0 393.8,234.0 394.6,234.0 395.4,234.0 396.2,234.0 397.0,234.0 397.8,234.0 398.6,234.0 399.4,234.0 400.2,234.0 401.0,234.0 401.8,234.0 402.6,234.0 403.4,234.0 404.2,234.0 404.6,234.0 405.0,234.0 405.8,231.6 406.6,229.0 407.0,229.0 407.4,227.5 408.2,226.7 409.0,227.6 409.8,229.1 410.6,228.0 411.4,226.2 412.2,229.2 413.0,227.6 413.8,225.0 414.6,227.5 415.4,228.5 416.2,227.6 417.0,227.2 417.8,229.4 418.6,226.8 419.4,228.7 420.2,224.6 421.0,225.4 421.8,229.1 422.6,224.4 423.4,226.8 424.2,229.3 425.0,225.5 425.8,225.8 426.6,226.8 427.4,227.1 428.2,227.0 429.0,224.7 429.8,227.0 430.6,225.5 431.4,222.6 432.2,226.5 433.0,228.8 433.8,227.0 434.0,226.0 434.6,225.1 435.4,222.8 436.2,220.3 437.0,220.0 437.8,219.4 438.6,217.3 439.4,221.1 440.2,218.3 441.0,217.4 441.8,217.0 442.6,219.7 443.4,213.3 444.2,216.1 445.0,219.9 445.8,215.8 446.0,215.0 446.6,215.0 447.4,224.8 448.2,215.4 449.0,220.0 449.8,227.5 450.6,227.9 451.4,232.1 451.5,234.0 452.2,234.0 453.0,234.0 453.8,228.7 454.6,221.2 455.0,222.0 455.4,219.2 456.2,223.7 457.0,220.2 457.8,218.4 458.6,219.1 459.4,214.2 460.2,220.5 461.0,214.7 461.8,216.8 462.6,220.4 463.4,218.3 464.2,215.5 465.0,217.6 465.8,216.7 466.6,218.0 467.4,216.9 468.2,218.9 469.0,221.2 469.8,222.6 470.6,214.5 471.4,216.6 472.0,216.0 472.2,218.2 473.0,214.1 473.8,219.2 474.6,221.0 475.4,216.8 476.2,217.4 477.0,224.0 477.8,221.5 478.6,222.0 479.4,218.0 480.2,216.6 481.0,218.6 481.8,222.2 482.6,222.8 483.4,220.4 484.2,225.4 485.0,221.8 485.8,222.5 486.0,222.0 486.6,228.8 487.0,234.0 487.4,234.0 488.2,234.0 489.0,234.0 489.8,234.0 490.5,234.0 490.6,233.2 491.4,227.2 492.0,221.0 492.2,227.2 493.0,222.1 493.8,220.2 494.6,223.6 495.4,220.7 496.2,219.1 497.0,222.1 497.8,219.5 498.6,219.9 499.4,223.0 500.2,222.2 501.0,220.2 501.8,218.7 502.6,218.1 503.4,218.8 504.2,217.7 505.0,224.9 505.8,217.6 506.6,212.9 507.4,214.8 508.2,215.6 509.0,218.1 509.8,219.6 510.0,218.0 510.6,219.7 511.4,211.1 512.2,214.5 513.0,215.4 513.8,212.6 514.6,211.5 515.4,205.0 516.2,211.1 517.0,210.7 517.8,211.6 518.6,211.2 519.4,203.9 520.2,207.7 521.0,202.9 521.8,202.7 522.6,200.5 523.4,200.5 524.0,203.0 524.2,200.5 525.0,206.6 525.8,200.5 526.6,213.8 527.4,214.1 528.2,212.2 529.0,212.0 529.8,218.7 530.6,225.4 531.4,230.6 532.0,234.0 532.2,234.0 533.0,234.0 533.5,234.0 533.8,226.2 534.6,210.7 535.0,200.0 535.4,199.1 536.2,189.3 537.0,198.4 537.8,201.1 538.6,197.0 539.4,190.5 540.2,188.9 541.0,192.0 541.8,188.4 542.6,202.8 543.4,187.8 544.2,185.5 545.0,184.5 545.8,182.3 546.6,191.6 547.4,192.8 548.2,179.0 549.0,177.4 549.8,178.4 550.0,181.0 550.6,184.6 551.4,184.3 552.2,190.3 553.0,184.0 553.8,184.5 554.6,195.7 555.4,193.8 556.2,193.7 556.5,197.0 557.0,199.0 557.8,193.2 558.6,177.5 559.4,197.1 560.2,182.2 561.0,176.5 561.8,175.4 562.0,174.0 562.6,180.9 563.4,188.9 564.2,172.8 565.0,174.5 565.8,170.0 566.6,185.5 567.4,178.3 568.2,191.6 569.0,184.0 569.8,180.8 570.6,181.4 571.4,173.0 572.0,175.0 572.2,174.4 573.0,163.1 573.8,165.3 574.6,163.3 575.0,157.0 575.4,150.4 576.2,155.5 577.0,150.8 577.8,148.7 578.6,144.4 579.4,155.8 579.5,143.0 580.2,145.7 581.0,146.3 581.8,158.6 582.6,160.0 583.4,160.2 584.2,140.4 585.0,132.3 585.7,123.0 585.8,127.0 586.6,102.1 587.4,88.3 588.2,101.5 589.0,86.0 589.8,109.2 590.3,84.0 590.6,83.5 591.4,83.5 592.2,97.0 593.0,102.3 593.8,124.4 594.6,140.6 594.9,123.0 595.4,117.9 596.2,84.1 597.0,94.8 597.8,89.5 598.0,77.0 598.6,83.3 599.4,106.4 599.5,109.0 600.2,84.5 601.0,77.6 601.8,62.1 602.6,42.0 603.4,41.5 604.2,70.9 605.0,66.4 605.7,77.0 605.8,76.5 606.6,76.5 607.4,90.9 608.0,92.0 608.2,101.5 608.7,155.0 609.0,155.5 609.8,151.2 610.6,152.3 611.4,161.2 611.8,147.0 612.2,136.8 613.0,135.3 613.8,116.5 614.3,117.0 614.6,108.9 615.4,113.0 616.2,118.3 617.0,111.0 617.8,107.5 618.0,108.0 618.6,131.9 619.4,148.9 619.5,154.0 620.2,180.2 621.0,215.0 621.8,219.6 622.6,225.2 623.4,230.7 623.5,229.0 624.2,227.4 625.0,223.0 625.8,221.4 626.6,222.7 627.4,220.0 628.2,220.3 629.0,223.9 629.8,215.0 630.6,225.9 631.4,220.2 632.2,221.3 633.0,223.8 633.8,221.1 634.6,223.8 635.4,225.6 636.2,222.1 637.0,223.7 637.8,222.3 638.6,222.6 639.4,218.8 640.2,218.6 641.0,224.2 641.8,218.0 642.0,221.0 642.6,220.1 643.4,222.2 644.2,220.7 645.0,216.5 645.8,221.4 646.6,215.9 647.4,213.7 648.2,215.2 648.6,215.0 649.0,214.2 649.8,213.7 650.6,200.8 651.4,206.9 652.2,205.9 653.0,194.3 653.8,193.8 654.0,196.0 654.6,193.1 655.4,201.7 656.2,201.7 657.0,206.6 657.8,202.9 658.6,212.3 659.0,209.0 659.4,209.6 660.2,207.7 661.0,211.4 661.8,208.0 662.6,212.0 663.4,206.7 664.0,214.0 664.2,211.1 665.0,210.1 665.8,222.5 666.6,213.8 667.4,215.4 668.2,217.1 669.0,215.5 669.8,214.1 670.6,215.4 671.4,218.2 672.2,220.7 673.0,218.0 673.8,220.2 674.6,221.9 675.4,229.3 676.0,229.0 676.2,227.5 677.0,224.6 677.8,228.0 678.6,218.5 679.0,222.0 679.4,223.9 680.2,220.8 681.0,221.3 681.8,222.6 682.6,222.0 683.4,223.7 684.2,218.2 685.0,221.5 685.8,219.1 686.6,219.8 687.0,220.0 687.4,219.0 688.2,223.0 689.0,218.4 689.8,219.2 690.6,220.4 691.4,220.5 692.2,220.4 693.0,217.1 693.8,216.4 694.6,214.7 695.4,216.6 696.2,215.9 697.0,221.1 697.8,215.5 698.6,214.3 699.0,215.0 699.4,212.0 700.2,213.5 701.0,215.2 701.8,215.9 702.6,220.0 703.4,215.6 704.2,214.2 705.0,213.2 705.8,222.3 706.6,218.9 707.4,208.8 708.2,213.5 709.0,214.7 709.8,220.1 710.6,213.0 711.4,215.3 712.2,215.3 713.0,214.0 713.8,218.3 714.6,215.5 715.4,215.2 716.2,216.7 717.0,216.5 717.8,215.1 718.6,223.0 719.4,216.4 720.2,220.2 721.0,222.0 721.8,226.9 722.0,223.0 722.6,220.6 723.4,218.6 724.2,222.0 725.0,220.4 725.8,220.4 726.6,215.9 727.4,217.1 728.2,217.3 729.0,219.5 729.8,222.6 730.6,216.7 731.4,212.9 732.2,213.1 733.0,216.2 733.8,211.3 734.6,208.6 735.4,209.4 736.0,209.0 736.2,209.3 737.0,212.2 737.8,215.6 738.6,224.1 739.4,225.1 740.2,229.5 740.5,232.0 741.0,225.8 741.8,219.0 742.6,219.3 743.0,212.0 743.4,209.2 744.2,212.4 745.0,213.8 745.8,213.5 746.6,214.0 747.0,212.0 747.4,209.6 748.2,225.6 749.0,234.0 749.8,230.8 750.0,232.0 750.6,230.7 751.4,231.5 752.2,231.7 753.0,232.9 753.8,231.8 754.6,232.4 755.4,230.0 756.2,231.5 757.0,230.7 757.8,232.0 758.6,232.4 759.4,232.3 760.2,231.8 761.0,232.7 761.8,232.2 762.6,232.7 763.4,233.1 764.2,231.8 765.0,232.5 765.8,231.0 766.6,231.9 767.4,232.1 767.7,232.0 768.2,219.5 769.0,203.0 769.8,214.2 770.6,206.5 771.0,203.0 771.4,215.9 772.0,231.0 772.2,231.0 773.0,232.8 773.8,233.8 774.6,231.4 775.4,233.2 776.2,231.4 777.0,230.9 777.8,228.6 778.6,230.4 779.4,229.3 780.2,230.6 781.0,230.5 781.8,231.4 782.6,232.1 783.4,230.6 784.2,231.8 785.0,229.6 785.8,230.2 786.6,228.8 787.4,231.1 788.2,230.6 789.0,230.0 789.8,232.8 790.6,232.1 791.4,230.9 792.2,230.9 793.0,231.7 793.8,229.9 794.6,231.2 795.4,230.8 796.2,229.7 797.0,230.4 797.8,230.6 798.6,232.3 799.4,231.5 800.0,231.0 800.2,229.6 801.0,223.5 801.5,220.0 801.8,220.5 802.6,220.6 803.4,219.8 804.2,224.7 805.0,221.5 805.8,219.4 806.6,218.7 807.0,220.0 807.4,215.7 808.2,211.0 809.0,215.0 809.8,213.4 810.6,217.2 811.4,211.0 812.2,213.1 813.0,220.3 813.8,217.7 814.6,213.0 815.4,215.6 816.2,215.2 817.0,212.0 817.8,218.3 818.6,210.8 819.4,213.3 820.2,215.9 821.0,219.6 821.8,212.0 822.6,211.2 823.4,218.5 824.2,212.1 825.0,218.0 825.8,212.2 826.6,216.1 827.4,213.2 828.2,220.0 829.0,213.6 829.8,213.0 830.6,215.5 831.4,211.9 832.2,213.9 833.0,209.9 833.8,211.7 834.0,215.0 834.6,225.0 835.0,231.0 835.4,231.1 836.2,229.9 837.0,231.0 837.8,232.2 838.6,230.9 839.4,232.2 840.2,230.6 841.0,231.7 841.8,229.8 842.6,232.6 843.4,231.9 844.2,231.2 845.0,231.7 845.8,230.9 846.6,232.2 847.4,231.9 848.2,229.6 849.0,230.4 849.8,232.2 850.0,231.0 850.6,220.0 851.0,209.0 851.4,207.8 852.2,212.6 853.0,216.2 853.8,203.9 854.6,215.1 855.4,207.3 856.2,207.1 857.0,202.4 857.8,209.7 858.6,207.5 859.4,211.8 860.2,208.9 861.0,209.0 861.8,230.0 862.0,230.0 862.6,228.7 863.4,231.0 864.2,226.5 865.0,229.1 865.8,230.1 866.6,227.9 867.4,231.9 868.2,230.2 869.0,229.3 869.8,227.4 870.6,229.8 871.4,229.7 872.2,228.1 873.0,228.5 873.8,232.6 874.6,229.3 875.4,229.7 876.2,228.2 877.0,232.1 877.8,230.6 878.0,230.0 878.6,220.4 879.4,210.5 879.7,203.0 880.2,204.3 881.0,194.3 881.8,189.8 882.6,189.2 883.4,180.5 883.7,184.0 884.2,180.5 885.0,180.5 885.3,184.0 885.8,203.1 886.5,224.0 886.6,222.8 887.4,220.9 888.2,223.7 889.0,221.8 889.8,220.6 890.6,224.1 891.4,224.1 892.2,223.0 893.0,221.5 893.8,220.9 894.6,223.7 895.4,222.6 896.2,226.7 897.0,225.8 897.8,225.7 898.6,223.4 899.4,226.6 900.2,223.2 901.0,223.7 901.8,222.9 902.6,224.0 903.4,224.7 904.2,225.8 905.0,221.3 905.8,224.8 906.6,224.0 907.4,226.8 908.2,221.3 909.0,223.0 909.5,234.0 909.8,234.0 910.6,234.0 911.4,234.0 912.2,234.0 913.0,234.0 913.5,234.0 913.8,232.3 914.6,224.1 915.0,221.0 915.4,221.4 916.2,226.3 917.0,217.0 917.8,220.8 918.6,221.3 919.4,224.4 920.2,217.9 921.0,220.4 921.8,220.8 922.6,219.4 923.4,218.8 924.2,221.4 925.0,222.8 925.8,222.7 926.6,221.3 927.4,223.5 928.2,218.8 929.0,218.4 929.8,221.3 930.6,218.2 931.4,220.9 932.2,218.6 933.0,218.6 933.8,221.9 934.6,221.7 935.4,222.1 936.2,221.9 937.0,222.5 937.8,221.2 938.6,221.4 939.4,220.2 940.2,218.3 941.0,224.5 941.8,220.2 942.6,223.2 943.0,219.0 943.4,218.8 944.2,213.0 945.0,211.3 945.8,215.9 946.0,210.0 946.6,208.0 947.4,209.1 948.2,213.5 949.0,211.0 949.8,211.5 950.6,213.6 951.4,210.8 952.2,209.5 953.0,211.9 953.8,208.1 954.6,208.1 955.4,202.0 956.2,206.1 956.5,210.0 957.0,207.3 957.8,207.5 958.6,202.3 959.4,194.4 960.2,205.1 960.5,192.0 961.0,197.4 961.8,205.3 962.6,197.2 963.4,191.2 964.2,205.5 965.0,208.7 965.7,212.0 965.8,214.3 966.6,212.9 967.4,219.8 968.0,226.0 968.2,226.8 969.0,224.0 969.8,224.5 970.6,221.6 971.4,223.2 972.2,223.4 973.0,227.0 973.8,220.0 974.6,226.0 975.4,221.0 976.2,223.3 977.0,227.6 977.8,219.6 978.6,225.4 979.4,227.4 980.2,224.2 981.0,224.8 981.8,225.5 982.6,224.1 983.4,225.6 984.2,221.9 985.0,224.3 985.8,222.2 986.6,227.8 987.4,223.0 988.2,227.4 989.0,227.4 989.8,225.8 990.6,224.2 991.4,220.7 992.0,224.0 992.2,225.7 993.0,224.6 993.8,220.1 994.6,214.7 995.0,218.0 995.4,219.2 996.2,215.6 997.0,221.4 997.8,219.6 998.6,221.1 999.4,217.3 1000.2,216.0 1001.0,215.4 1001.8,216.5 1002.6,216.2 1003.4,216.5 1004.2,217.0 1005.0,215.8 1005.8,220.0 1006.6,219.4 1007.4,215.4 1008.2,215.8 1009.0,220.7 1009.8,218.6 1010.6,219.0 1011.4,218.4 1012.2,223.6 1013.0,217.2 1013.8,216.3 1014.6,219.3 1015.4,221.8 1016.2,216.2 1017.0,219.2 1017.8,217.7 1018.6,213.9 1019.4,216.3 1020.2,223.1 1021.0,220.6 1021.8,214.8 1022.6,219.5 1023.4,217.4 1024.2,214.2 1025.0,220.8 1025.8,218.3 1026.6,223.3 1027.4,223.1 1028.2,217.5 1029.0,224.0 1029.8,221.1 1030.6,219.6 1031.4,216.7 1032.2,217.3 1033.0,217.8 1033.8,216.7 1034.6,218.5 1035.4,217.5 1036.2,216.4 1037.0,211.2 1037.8,221.1 1038.6,214.3 1039.4,214.1 1040.2,221.6 1041.0,218.0 1041.8,211.9 1042.6,212.7 1043.0,206.0 1043.4,209.7 1044.2,211.8 1045.0,217.0 1045.8,219.0 1046.6,213.1 1047.4,214.0 1048.2,214.9 1049.0,218.5 1049.8,215.3 1050.6,210.2 1051.4,210.7 1052.2,215.5 1053.0,219.4 1053.8,216.9 1054.6,217.3 1055.4,209.4 1056.2,216.6 1057.0,215.7 1057.8,217.8 1058.6,219.1 1059.4,217.0 1060.2,219.3 1061.0,216.6 1061.8,219.5 1062.6,214.2 1063.4,218.6 1064.2,217.2 1065.0,213.5 1065.8,218.6 1066.6,217.6 1067.4,219.3 1068.2,216.7 1069.0,219.4 1069.8,220.3 1070.6,216.6 1071.4,220.0 1072.2,217.9 1073.0,218.5 1073.8,221.7 1074.6,216.5 1075.4,218.5 1076.2,218.2 1077.0,213.5 1077.8,217.2 1078.6,214.0 1079.4,218.4 1080.2,215.5 1081.0,214.1 1081.8,222.7 1082.6,215.1 1083.4,213.1 1084.2,214.7 1085.0,219.5 1085.8,218.0 1086.6,217.1 1087.4,217.8 1088.2,216.6 1089.0,212.7 1089.8,217.6 1090.6,218.0 1091.4,218.3 1092.2,219.2 1093.0,217.8 1093.8,220.1 1094.6,218.4 1095.4,217.7 1096.2,216.9 1097.0,218.5 1097.8,219.7 1098.6,215.3 1099.4,218.3 1100.2,223.6 1101.0,215.6 1101.8,222.0 1102.6,214.2 1103.4,220.0 1104.2,218.0 1105.0,214.5 1105.8,222.2 1106.6,221.2 1107.4,214.9 1108.2,219.4 1109.0,216.0 1109.8,220.0 1110.6,219.1 1111.4,216.3 1112.2,216.3 1113.0,217.6 1113.8,218.6 1114.0,218.0 1114.6,221.9 1115.4,217.0 1116.2,217.1 1117.0,214.0 1117.8,217.6 1118.6,215.3 1119.4,215.0 1120.2,211.5 1121.0,212.5 1121.8,205.0 1122.6,205.7 1123.4,210.8 1124.2,205.3 1125.0,208.5 1125.8,206.6 1126.6,204.6 1127.0,207.0 1127.4,201.5 1128.2,199.1 1129.0,200.0 1129.8,209.3 1130.6,207.6 1131.4,203.2 1132.0,210.0 1132.2,208.1 1133.0,206.3 1133.8,192.6 1134.6,183.9 1135.4,180.5 1135.5,184.0 1136.2,181.6 1137.0,186.4 1137.8,183.1 1138.4,178.0 1138.6,174.2 1139.4,174.2 1140.0,186.0 1140.2,183.1 1141.0,190.8 1141.8,184.7 1142.6,182.6 1143.4,182.6 1144.2,188.5 1145.0,182.6 1145.8,182.6 1146.6,194.9 1147.4,193.9 1148.2,197.8 1149.0,193.9 1149.8,196.6 1150.6,187.9 1150.7,186.0 1151.4,181.6 1152.0,177.0 1152.2,191.7 1153.0,184.3 1153.8,191.7 1154.6,206.8 1155.0,197.0 1155.4,199.0 1156.2,187.1 1157.0,184.0 1157.8,191.0 1158.6,180.5 1159.4,180.5 1160.2,199.2 1161.0,183.7 1161.8,180.5 1162.6,180.5 1163.0,184.0 1163.4,189.9 1164.0,197.0 1164.2,193.7 1165.0,184.2 1165.8,166.1 1166.0,160.0 1166.6,150.0 1167.4,150.5 1168.2,145.6 1169.0,138.0 1169.8,144.1 1170.6,140.2 1171.4,132.1 1172.0,129.0 1172.2,154.2 1173.0,224.0 1173.8,224.0 1174.6,163.2 1175.3,117.0 1175.4,100.7 1176.2,120.1 1177.0,102.0 1177.8,97.5 1178.3,98.0 1178.6,105.1 1179.4,98.3 1180.2,88.5 1181.0,91.8 1181.4,89.0 1181.8,80.8 1182.6,43.0 1183.4,34.9 1183.5,28.0 1184.2,25.9 1185.0,37.2 1185.8,59.9 1186.0,22.0 1186.6,39.4 1187.4,32.5 1188.0,49.0 1188.2,43.4 1189.0,16.0 1189.8,10.5 1190.6,29.3 1191.2,11.0 1191.4,10.5 1192.2,33.5 1192.8,40.0 1193.0,39.5 1193.8,39.5 1194.6,54.0 1195.4,36.6 1196.0,25.0 1196.2,43.5 1197.0,44.5 1197.8,43.7 1198.3,49.0 1198.6,48.5 1199.4,69.4 1200.2,73.8 1200.7,74.0 1201.0,64.8 1201.8,62.7 1202.6,41.8 1203.0,39.0 1203.4,67.2 1204.2,121.1 1204.4,123.0 1205.0,174.3 1205.4,209.0 1205.8,211.8 1206.6,210.1 1207.0,206.0 1207.4,203.6 1208.2,203.6 1209.0,210.2 1209.8,205.1 1210.6,208.0 1211.4,215.1 1212.2,208.0 1213.0,207.8 1213.8,214.7 1214.6,204.8 1215.0,212.0 1215.4,216.2 1216.2,218.7 1217.0,210.5 1217.8,206.9 1218.6,213.0 1219.4,203.9 1220.2,208.2 1221.0,206.4 1221.8,205.2 1222.6,208.4 1223.4,208.6 1224.2,207.6 1225.0,206.0 1225.8,202.1 1226.6,196.6 1227.4,197.3 1228.2,194.8 1229.0,197.0 1229.8,194.1 1230.6,197.5 1231.4,183.0 1232.2,187.0 1233.0,193.0 1233.8,181.7 1234.6,189.8 1235.0,184.0 1235.4,175.1 1236.2,174.2 1237.0,174.2 1237.8,179.0 1238.0,178.0 1238.6,156.2 1239.4,133.3 1239.7,118.0 1240.2,140.7 1241.0,159.5 1241.3,172.0 1241.8,177.6 1242.6,185.1 1243.4,190.0 1243.7,192.0 1244.2,181.8 1245.0,174.7 1245.8,171.1 1246.0,167.0 1246.6,171.2 1247.4,175.0 1248.2,184.0 1249.0,197.0 1249.8,189.7 1250.6,183.0 1251.4,179.4 1252.2,171.3 1253.0,165.5 1253.5,166.0 1253.8,165.5 1254.6,181.6 1255.0,184.0 1255.4,181.5 1256.2,157.4 1257.0,145.4 1257.2,143.0 1257.8,172.8 1258.6,200.1 1258.8,210.0 1259.4,212.2 1260.2,213.4 1261.0,210.7 1261.8,205.8 1262.6,216.1 1263.4,210.6 1264.2,209.7 1265.0,207.6 1265.8,211.4 1266.6,212.9 1267.0,212.0 1267.4,217.0 1268.2,219.5 1269.0,217.7 1269.8,221.0 1270.4,224.0 1270.6,226.6 1271.4,224.4 1272.2,227.5 1273.0,227.0 1273.5,230.0 1273.8,228.1 1274.6,226.8 1275.0,228.0 1275.4,228.9 1276.2,228.9 1277.0,229.8 1277.8,226.2 1278.6,226.4 1279.4,228.8 1280.2,230.8 1281.0,226.7 1281.8,229.0 1282.6,226.9 1283.4,228.2 1284.2,229.0 1285.0,229.7 1285.8,224.9 1286.6,229.3 1287.4,227.0 1288.2,228.5 1289.0,228.0 1289.8,228.1 1290.6,229.2 1291.4,228.8 1292.2,226.9 1293.0,229.2 1293.8,225.1 1294.6,228.4 1295.4,228.8 1296.2,227.4 1297.0,228.1 1297.8,228.3 1298.6,228.8 1299.4,228.1 1300.2,226.5 1301.0,227.0 1301.8,227.3 1302.6,228.6 1303.4,227.7 1304.2,227.4 1305.0,225.6 1305.8,226.2 1306.6,225.5 1307.4,226.9 1308.2,228.2 1309.0,227.9 1309.8,226.3 1310.6,230.9 1311.4,230.1 1312.2,228.5 1313.0,225.1 1313.8,227.1 1314.6,227.9 1315.4,225.0 1316.2,228.5 1317.0,225.5 1317.8,229.7 1318.6,226.9 1319.4,229.9 1320.2,229.0 1321.0,226.7 1321.8,229.5 1322.6,227.6 1323.4,226.5 1324.2,230.9 1325.0,227.3 1325.8,227.9 1326.6,228.5 1327.4,232.0 1328.2,226.8 1329.0,228.7 1329.8,227.8 1330.6,226.6 1331.4,229.2 1332.2,229.3 1333.0,228.2 1333.8,228.9 1334.6,228.5 1335.4,228.8 1336.2,228.7 1337.0,228.3 1337.8,228.1 1338.6,228.3 1339.4,224.1 1340.2,225.8 1341.0,227.9 1341.8,228.1 1342.6,229.1 1343.4,229.6 1344.2,225.3 1345.0,229.0 1345.8,230.2 1346.6,225.5 1347.4,228.6 1348.2,227.1 1349.0,228.6 1349.8,228.6 1350.6,228.7 1351.4,227.7 1352.2,226.3 1353.0,226.6 1353.8,226.9 1354.6,228.6 1355.4,229.9 1356.2,227.7 1357.0,225.6 1357.8,227.8 1358.6,228.7 1359.4,230.4 1360.2,229.4 1361.0,228.4 1361.8,226.2 1362.6,226.0 1363.4,227.7 1364.2,225.9 1365.0,228.2 1365.8,228.4 1366.6,228.2 1367.4,225.3 1368.2,227.6 1369.0,227.7 1369.8,227.4 1370.6,227.6 1371.4,226.4 1372.2,227.8 1373.0,228.0 1373.8,227.8 1374.6,228.6 1375.4,227.7 1376.2,230.3 1377.0,228.8 1377.8,230.7 1378.6,226.1 1379.4,227.1 1380.2,228.1 1381.0,226.1 1381.8,228.8 1382.6,225.9 1383.4,226.3 1384.2,227.5 1385.0,227.2 1385.8,226.4 1386.6,229.7 1387.4,229.3 1388.2,228.5 1389.0,230.4 1389.8,227.9 1390.6,227.2 1391.4,227.1 1392.2,229.6 1393.0,227.1 1393.8,227.4 1394.6,227.8 1395.4,227.0 1396.2,226.5 1397.0,227.5 1397.8,229.1 1398.6,228.8 1399.4,225.6 1400.2,228.1 1401.0,231.8 1401.8,226.6 1402.6,228.4 1403.4,228.9 1404.2,227.1 1405.0,230.3 1405.8,228.0 1406.6,230.2 1407.4,226.9 1408.2,230.4 1409.0,229.7 1409.8,226.6 1410.6,227.8 1411.4,229.3 1412.2,226.7 1413.0,228.0 1413.8,228.5 1414.6,226.9 1415.4,222.2 1416.2,221.6 1416.7,220.0 1417.0,216.3 1417.8,222.6 1418.6,224.4 1419.0,226.0 1419.4,222.6 1420.2,227.2 1421.0,226.5 1421.8,226.0 1422.6,225.7 1423.4,224.9 1424.2,226.0 1425.0,224.3 1425.8,225.5 1426.6,228.6 1427.4,228.7 1428.2,226.0 1429.0,222.6 1429.8,223.6 1430.6,225.7 1431.4,224.2 1432.2,224.3 1433.0,226.6 1433.8,226.5 1434.6,227.0 1435.4,225.8 1436.2,228.7 1437.0,223.9 1437.8,227.6 1438.6,223.1 1439.4,221.3 1440.2,224.9 1441.0,225.8 1441.8,222.9 1442.6,225.9 1443.4,223.9 1444.0,224.0 1444.2,221.1 1445.0,222.1 1445.8,218.9 1446.6,220.0 1447.0,218.0 1447.4,216.6 1448.2,218.3 1449.0,217.7 1449.8,219.0 1450.6,213.9 1451.4,213.3 1452.2,215.0 1453.0,217.6 1453.8,215.2 1454.6,214.6 1455.0,212.0 1455.4,215.3 1456.2,219.2 1457.0,220.0 1457.8,223.3 1458.6,221.4 1459.4,226.4 1460.2,221.6 1461.0,220.6 1461.8,221.1 1462.6,219.4 1463.0,220.0 1463.4,220.1 1464.2,215.7 1465.0,213.6 1465.8,208.4 1466.0,209.0 1466.6,206.9 1467.4,207.0 1468.2,206.9 1469.0,202.4 1469.8,213.5 1470.6,201.0 1471.4,203.5 1472.0,200.0 1472.2,200.1 1473.0,198.1 1473.8,197.7 1474.6,179.5 1475.0,183.0 1475.4,179.5 1476.2,184.8 1477.0,181.7 1477.8,192.1 1478.0,194.0 1478.6,182.5 1479.4,191.1 1480.2,179.0 1481.0,181.0 1481.8,174.2 1482.6,174.5 1483.4,192.1 1484.2,174.2 1485.0,174.2 1485.8,174.2 1486.0,178.0 1486.6,182.1 1487.4,192.4 1488.2,170.0 1489.0,174.0 1489.8,180.4 1490.4,189.0 1490.6,181.3 1491.3,171.0 1491.4,175.3 1492.2,175.9 1493.0,170.5 1493.8,170.5 1494.6,174.9 1495.0,175.0 1495.4,202.5 1496.2,199.3 1496.5,209.0 1497.0,207.6 1497.8,222.2 1498.0,226.0 1498.6,224.8 1499.4,228.0 1500.0,229.0 1500.2,231.0 1501.0,228.2 1501.8,230.2 1502.6,228.8 1503.4,227.8 1504.2,230.2 1505.0,229.6 1505.8,225.0 1506.6,229.9 1507.4,226.4 1508.2,227.4 1509.0,227.5 1509.8,226.6 1510.6,228.7 1511.4,230.0 1512.2,227.2 1513.0,228.5 1513.8,225.4 1514.6,229.9 1515.4,228.6 1516.2,227.1 1517.0,230.3 1517.8,228.6 1518.6,229.7 1519.4,231.7 1520.2,230.7 1521.0,229.4 1521.8,230.8 1522.6,231.9 1523.4,229.1 1524.0,229.0 1524.2,229.8 1525.0,231.8 1525.7,234.0 1525.8,234.0 1526.6,229.8 1527.4,222.3 1528.0,220.0 1528.2,217.7 1529.0,213.1 1529.8,216.2 1530.6,208.6 1531.4,208.3 1531.8,202.0 1532.2,212.9 1533.0,213.4 1533.4,226.0 1533.8,224.2 1534.6,228.9 1535.4,225.1 1536.2,217.8 1536.5,220.0 1537.0,222.3 1537.8,223.3 1538.6,220.8 1539.4,222.4 1540.2,221.7 1541.0,217.3 1541.8,216.8 1542.6,220.5 1543.4,220.2 1544.2,217.9 1545.0,222.2 1545.8,220.1 1546.0,220.0 1546.6,219.3 1547.4,213.4 1548.0,215.0 1548.2,214.4 1549.0,224.5 1549.8,228.2 1550.3,229.0 1550.6,228.2 1551.4,230.2 1552.0,231.0 1552.2,230.0 1553.0,230.4 1553.8,231.9 1554.6,233.4 1555.4,230.4 1556.2,233.1 1557.0,230.9 1557.8,231.6 1558.6,232.0 1559.4,231.6 1560.2,230.8 1561.0,230.6 1561.8,229.9 1562.6,231.0 1563.4,231.7 1564.2,230.5 1565.0,232.3 1565.8,231.4 1566.6,230.2 1567.4,231.8 1568.2,231.7 1569.0,231.0 1569.8,232.5 1570.6,230.3 1571.4,232.3 1572.2,230.1 1573.0,229.7 1573.8,232.1 1574.6,230.7 1575.4,230.8 1576.2,232.5 1577.0,229.9 1577.8,230.2 1578.6,231.9 1579.4,230.4 1580.2,233.3 1581.0,231.8 1581.8,232.5 1582.6,231.8 1583.4,231.9 1584.2,231.4 1585.0,231.3 1585.8,231.3 1586.6,229.3 1587.4,230.3 1588.2,230.9 1589.0,230.3 1589.8,231.0 1590.6,230.2 1591.4,231.8 1591.5,231.0"/>
<path d="M114.0 234H275.0" stroke="#587488" stroke-width="2"/>
<path d="M330.0 234H354.6" stroke="#587488" stroke-width="2"/>
<path d="M363.5 234H405.0" stroke="#587488" stroke-width="2"/>
<path d="M451.5 234H453.0" stroke="#587488" stroke-width="2"/>
<path d="M487.0 234H490.5" stroke="#587488" stroke-width="2"/>
<path d="M532.0 234H533.5" stroke="#587488" stroke-width="2"/>
<path d="M909.5 234H913.5" stroke="#587488" stroke-width="2"/>
</svg>
<div class="b" style="left:1073.00px;top:645.00px;width:52.00px;height:14.00px;background:#f0f0f0;border:1px solid #c9c9c9;border-bottom:none;"></div>
<svg style="left:1095.300px;top:648.700px" width="8" height="4.500" viewBox="0 0 8 4.500"><path d="M0 4.500h8L4 0z" fill="#000"/></svg>
<div class="b" style="left:303.00px;top:658.00px;width:1594.00px;height:182.00px;background:#f0f0f0;border:1px solid #dedede;"></div>
<div class="b" style="left:1074.00px;top:658.00px;width:50.00px;height:1.00px;background:#f0f0f0;"></div>
<div class="b" style="left:309.00px;top:664.00px;width:102.00px;height:29.00px;background:#f1f1f1;border:1px solid #e2e2e2;border-radius:2px;"></div>
<svg style="left:318px;top:673px" width="14" height="12" viewBox="0 0 14 12"><path d="M0 0h14L8.500 6v6h-3V6z" fill="#9a9a9a"/></svg>
<div class="t" style="left:338.20px;top:672.99px;font-size:11px;line-height:11px;color:#b3b3b3;font-weight:bold;letter-spacing:-0.060px;">Фильтрация</div>
<div class="b" style="left:414.00px;top:664.00px;width:91.00px;height:29.00px;background:#f1f1f1;border:1px solid #e2e2e2;border-radius:2px;"></div>
<svg style="left:422px;top:672.500px" width="14" height="12" viewBox="0 0 14 12"><path d="M1.500 .500v10.500h12" stroke="#9a9a9a" stroke-width="1.600" fill="none"/><path d="M4 7.500l2.500-3 2 1.500 3.500-3.500" stroke="#9a9a9a" stroke-width="1.100" fill="none"/></svg>
<div class="t" style="left:443.00px;top:672.99px;font-size:11px;line-height:11px;color:#b3b3b3;font-weight:bold;letter-spacing:-0.043px;">Сравнить</div>
<div class="t" style="left:1600.70px;top:672.99px;font-size:11px;line-height:11px;color:#777;letter-spacing:-0.033px;">Show rows</div>
<div class="b" style="left:1666.00px;top:664.00px;width:72.00px;height:29.00px;background:linear-gradient(#f8f8f8,#f1f1f1);border:1px solid #dcdcdc;border-radius:2px;"></div>
<div class="t" style="left:1690.50px;top:672.99px;font-size:11px;line-height:11px;color:#333;font-weight:bold;letter-spacing:-0.117px;">50</div>
<svg style="left:1723.500px;top:676px" width="8" height="5" viewBox="0 0 8 5"><path d="M0 0h8L4 4.500z" fill="#555"/></svg>
<div class="t" style="left:1758.00px;top:672.99px;font-size:11px;line-height:11px;color:#555;letter-spacing:-0.192px;">1 - 1 из 1</div>
<div class="b" style="left:1816.00px;top:664.00px;width:75.00px;height:29.00px;background:#f1f1f1;border:1px solid #e2e2e2;border-radius:2px;"></div>
<div class="b" style="left:1852.50px;top:665.00px;width:1.00px;height:27.00px;background:#e2e2e2;"></div>
<svg style="left:1829.500px;top:672.500px" width="9" height="13" viewBox="0 0 9 13"><path d="M7.500 1L2 6.500 7.500 12" stroke="#9e9e9e" stroke-width="1.800" fill="none"/></svg>
<svg style="left:1867.500px;top:672.500px" width="9" height="13" viewBox="0 0 9 13"><path d="M1.500 1L7 6.500 1.500 12" stroke="#9e9e9e" stroke-width="1.800" fill="none"/></svg>
<div class="b" style="left:304.00px;top:698.00px;width:1592.00px;height:1.00px;background:#e4e4e4;"></div>
<div class="b" style="left:304.00px;top:733.00px;width:1592.00px;height:35.00px;background:#fff;"></div>
<div class="b" style="left:304.00px;top:803.00px;width:1592.00px;height:1.00px;background:#e4e4e4;"></div>
<div class="b" style="left:304.00px;top:768.00px;width:1592.00px;height:1.00px;background:#e4e4e4;"></div>
<div class="b" style="left:514.00px;top:699.00px;width:1.00px;height:140.00px;background:rgba(0,0,0,.04);"></div>
<div class="b" style="left:702.00px;top:699.00px;width:1.00px;height:140.00px;background:rgba(0,0,0,.04);"></div>
<div class="b" style="left:826.00px;top:699.00px;width:1.00px;height:140.00px;background:rgba(0,0,0,.04);"></div>
<div class="b" style="left:924.00px;top:699.00px;width:1.00px;height:140.00px;background:rgba(0,0,0,.04);"></div>
<div class="b" style="left:1208.00px;top:699.00px;width:1.00px;height:140.00px;background:rgba(0,0,0,.04);"></div>
<div class="b" style="left:1436.00px;top:699.00px;width:1.00px;height:140.00px;background:rgba(0,0,0,.04);"></div>
<div class="b" style="left:1717.00px;top:699.00px;width:1.00px;height:140.00px;background:rgba(0,0,0,.04);"></div>
<div class="b" style="left:315.00px;top:709.00px;width:13.00px;height:13.00px;background:rgba(255,255,255,.35);border:1px solid #c2c2c2;border-radius:2px;"></div>
<div class="b" style="left:315.00px;top:745.00px;width:13.00px;height:13.00px;background:rgba(255,255,255,.35);border:1px solid #c2c2c2;border-radius:2px;"></div>
<div class="t" style="left:352.40px;top:710.69px;font-size:11px;line-height:11px;color:#505050;letter-spacing:0.096px;-webkit-text-stroke:0.3px;">Сайт</div>
<div class="t" style="left:352.40px;top:780.69px;font-size:11px;line-height:11px;color:#505050;letter-spacing:0.335px;-webkit-text-stroke:0.3px;">Итого</div>
<div class="t" style="left:352.40px;top:815.69px;font-size:11px;line-height:11px;color:#505050;letter-spacing:0.312px;-webkit-text-stroke:0.3px;">Средние значения</div>
<div class="t" style="right:1207.71px;top:710.69px;font-size:11px;line-height:11px;color:#505050;letter-spacing:0.490px;-webkit-text-stroke:0.3px;">Просмотры страниц</div>
<div class="t" style="right:1208.23px;top:744.80px;font-size:13px;line-height:13px;color:#222;letter-spacing:-0.033px;">12 362 758</div>
<div class="t" style="right:1208.20px;top:780.69px;font-size:11px;line-height:11px;color:#555;letter-spacing:0.000px;">12 362 758</div>
<div class="t" style="right:1208.20px;top:815.69px;font-size:11px;line-height:11px;color:#555;letter-spacing:0.000px;">12 362 758</div>
<div class="t" style="right:1083.46px;top:710.69px;font-size:11px;line-height:11px;color:#505050;letter-spacing:0.537px;-webkit-text-stroke:0.3px;">Показы</div>
<div class="t" style="right:1084.03px;top:744.80px;font-size:13px;line-height:13px;color:#222;letter-spacing:-0.033px;">53 495 829</div>
<div class="t" style="right:1084.00px;top:780.69px;font-size:11px;line-height:11px;color:#555;letter-spacing:0.000px;">53 495 829</div>
<div class="t" style="right:1084.00px;top:815.69px;font-size:11px;line-height:11px;color:#555;letter-spacing:0.000px;">53 495 829</div>
<div class="t" style="right:985.44px;top:710.69px;font-size:11px;line-height:11px;color:#505050;letter-spacing:0.561px;-webkit-text-stroke:0.3px;">Клики</div>
<div class="t" style="right:986.03px;top:744.80px;font-size:13px;line-height:13px;color:#222;letter-spacing:-0.034px;">386 505</div>
<div class="t" style="right:986.00px;top:780.69px;font-size:11px;line-height:11px;color:#555;letter-spacing:0.000px;">386 505</div>
<div class="t" style="right:986.00px;top:815.69px;font-size:11px;line-height:11px;color:#555;letter-spacing:0.000px;">386 505</div>
<div class="t" style="right:701.54px;top:710.69px;font-size:11px;line-height:11px;color:#505050;letter-spacing:0.460px;-webkit-text-stroke:0.3px;">Доход за тыс. показов страницы</div>
<div class="t" style="right:702.21px;top:744.80px;font-size:13px;line-height:13px;color:#222;letter-spacing:-0.211px;">1,60 $</div>
<div class="t" style="right:702.08px;top:780.69px;font-size:11px;line-height:11px;color:#555;letter-spacing:-0.076px;">1,60 $</div>
<div class="t" style="right:702.00px;top:815.69px;font-size:11px;line-height:11px;color:#555;letter-spacing:0.000px;">–</div>
<div class="t" style="right:473.52px;top:710.69px;font-size:11px;line-height:11px;color:#505050;letter-spacing:0.484px;-webkit-text-stroke:0.3px;">Доход на тысячу показов</div>
<div class="t" style="right:474.21px;top:744.80px;font-size:13px;line-height:13px;color:#222;letter-spacing:-0.211px;">0,37 $</div>
<div class="t" style="right:474.08px;top:780.69px;font-size:11px;line-height:11px;color:#555;letter-spacing:-0.076px;">0,37 $</div>
<div class="t" style="right:474.00px;top:815.69px;font-size:11px;line-height:11px;color:#555;letter-spacing:0.000px;">–</div>
<div class="t" style="right:192.75px;top:710.69px;font-size:11px;line-height:11px;color:#505050;letter-spacing:0.451px;-webkit-text-stroke:0.3px;">Показы в видимой части экрана</div>
<div class="t" style="right:193.71px;top:744.80px;font-size:13px;line-height:13px;color:#222;letter-spacing:-0.515px;">43,03%</div>
<div class="t" style="right:193.58px;top:780.69px;font-size:11px;line-height:11px;color:#555;letter-spacing:-0.384px;">43,03%</div>
<div class="t" style="right:193.20px;top:815.69px;font-size:11px;line-height:11px;color:#555;letter-spacing:0.000px;">–</div>
<div class="t" style="right:14.97px;top:710.69px;font-size:11px;line-height:11px;color:#505050;letter-spacing:0.431px;-webkit-text-stroke:0.3px;">Расчетный доход *</div>
<div class="t" style="right:15.62px;top:744.80px;font-size:13px;line-height:13px;color:#222;letter-spacing:-0.218px;">19 772,46 $</div>
<div class="t" style="right:15.48px;top:780.69px;font-size:11px;line-height:11px;color:#555;letter-spacing:-0.079px;">19 772,46 $</div>
<div class="t" style="right:15.48px;top:815.69px;font-size:11px;line-height:11px;color:#555;letter-spacing:-0.079px;">19 772,46 $</div>
</body></html>
